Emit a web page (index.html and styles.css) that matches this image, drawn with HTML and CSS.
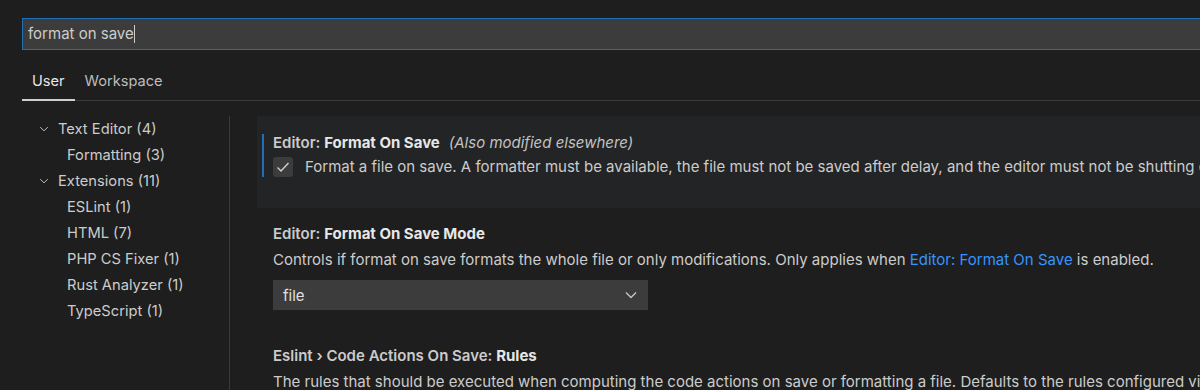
FILE: index.html
```html
<!DOCTYPE html>
<html>

<head>
    <meta charset="utf-8" />
    <title>Settings</title>
    <link rel="stylesheet" href="styles.css">
</head>

<body>
    <div class="settings-editor">
        <div class="search-row">
            <div class="search-box">format on save<span class="caret"></span></div>
        </div>
        <div class="tabs">
            <div class="tab current">User</div>
            <div class="tab">Workspace</div>
        </div>
        <div class="body">
            <ul class="toc">
                <li class="group"><span class="twisty"><svg width="12" height="12" viewBox="0 0 16 16"><path d="M3 5.5l5 5 5-5" fill="none" stroke="#c5c5c5" stroke-width="1.3"/></svg></span>Text Editor (4)</li>
                <li class="child">Formatting (3)</li>
                <li class="group"><span class="twisty"><svg width="12" height="12" viewBox="0 0 16 16"><path d="M3 5.5l5 5 5-5" fill="none" stroke="#c5c5c5" stroke-width="1.3"/></svg></span>Extensions (11)</li>
                <li class="child">ESLint (1)</li>
                <li class="child">HTML (7)</li>
                <li class="child">PHP CS Fixer (1)</li>
                <li class="child">Rust Analyzer (1)</li>
                <li class="child">TypeScript (1)</li>
            </ul>
            <div class="sash"></div>
            <div class="list">
                <div class="setting focused">
                    <div class="setting-inner">
                        <div class="title"><span class="cat">Editor: </span><b>Format On Save</b><i class="note">(Also modified elsewhere)</i></div>
                        <div class="bool-row">
                            <span class="checkbox"><svg width="16" height="16" viewBox="0 0 16 16"><path d="M2.5 8.5l3.5 3.5 7.5-8" fill="none" stroke="#d0d0d0" stroke-width="1.4"/></svg></span>
                            <span class="desc">Format a file on save. A formatter must be available, the file must not be saved after delay, and the editor must not be shutting down.</span>
                        </div>
                    </div>
                </div>
                <div class="setting">
                    <div class="setting-inner">
                        <div class="title"><span class="cat">Editor: </span><b>Format On Save Mode</b></div>
                        <div class="desc">Controls if format on save formats the whole file or only modifications. Only applies when <a href="#">Editor: Format On Save</a> is enabled.</div>
                        <div class="select">
                            <span>file</span>
                            <svg width="16" height="16" viewBox="0 0 16 16"><path d="M3 5.5l5 5 5-5" fill="none" stroke="#c5c5c5" stroke-width="1.4"/></svg>
                        </div>
                    </div>
                </div>
                <div class="setting">
                    <div class="setting-inner">
                        <div class="title"><span class="cat">Eslint › Code Actions On Save: </span><b>Rules</b></div>
                        <div class="desc">The rules that should be executed when computing the code actions on save or formatting a file. Defaults to the rules configured via your ESLint configuration.</div>
                    </div>
                </div>
            </div>
        </div>
    </div>
</body>

</html>
```

FILE: styles.css
```css
html, body {
    margin: 0;
    padding: 0;
    background: #1e1e1e;
    height: 100%;
    overflow: hidden;
}

.settings-editor {
    font-family: Inter, "Noto Sans", sans-serif;
    color: #cccccc;
    font-size: 13px;
    width: 1200px;
    height: 390px;
    overflow: hidden;
}

.search-row {
    padding: 18px 0 0 22px;
}

.search-box {
    height: 30px;
    line-height: 30px;
    border: 1px solid #1f6fb5;
    border-right: 0;
    background: #3c3c3c;
    padding-left: 5px;
    font-size: 15px;
    color: #cccccc;
    white-space: nowrap;
}

.caret {
    display: inline-block;
    width: 1px;
    height: 18px;
    background: #cccccc;
    vertical-align: -4px;
}

.tabs {
    display: flex;
    margin: 18px 0 0 22px;
    border-bottom: 1px solid #3a3a3a;
}

.tab {
    font-size: 14.6px;
    color: #bdbdbd;
    padding: 4px 10px 10px 10px;
    margin-bottom: -1px;
}

.tab.current {
    color: #e7e7e7;
    border-bottom: 2px solid #cfcfcf;
    padding-bottom: 9px;
}

.body {
    display: flex;
    margin-top: 15px;
}

.toc {
    list-style: none;
    margin: 0;
    padding: 0;
    width: 229px;
    flex: none;
}

.toc li {
    height: 26px;
    line-height: 26px;
    font-size: 14.7px;
    color: #cccccc;
    white-space: nowrap;
}

.toc .group {
    padding-left: 38px;
}

.toc .child {
    padding-left: 67px;
}

.twisty {
    display: inline-block;
    width: 20px;
    vertical-align: -1px;
}

.sash {
    width: 1px;
    background: #3a3a3a;
    height: 290px;
    flex: none;
}

.list {
    flex: 1;
    padding-left: 27px;
    min-width: 0;
}

.setting {
    padding: 0 0 0 5px;
}

.setting.focused {
    background: #232425;
    padding-top: 18px;
    padding-bottom: 31px;
}

.setting-inner {
    padding-left: 11px;
    margin-right: -200px;
}

.focused .setting-inner {
    border-left: 2px solid #1f6fb5;
    padding-left: 9px;
}

.setting + .setting {
    padding-top: 17px;
    padding-bottom: 20px;
}

.title {
    font-size: 15px;
    line-height: 18px;
    padding-bottom: 7px;
    white-space: nowrap;
    color: #e7e7e7;
}

.focused .title {
    padding-bottom: 5px;
}

.title .cat {
    color: #cbcbcb;
    font-weight: 600;
}

.title b {
    font-weight: 700;
}

.note {
    color: #c2c2c2;
    margin-left: 9px;
}

.bool-row {
    display: flex;
    align-items: center;
    gap: 12px;
    height: 20px;
}

.checkbox {
    width: 20px;
    height: 20px;
    border-radius: 3px;
    background: #3c3c3c;
    display: flex;
    align-items: center;
    justify-content: center;
    flex: none;
}

.desc {
    font-size: 15px;
    line-height: 20px;
    color: #cccccc;
    white-space: nowrap;
}

.bool-row .desc {
    overflow: hidden;
}

.desc a {
    color: #3794ff;
    text-decoration: none;
}

.select {
    margin-top: 10px;
    width: 375px;
    height: 30px;
    background: #3c3c3c;
    display: flex;
    align-items: center;
    justify-content: space-between;
    padding: 0 9px 0 10px;
    box-sizing: border-box;
    font-size: 15px;
    color: #e0e0e0;
}
```
